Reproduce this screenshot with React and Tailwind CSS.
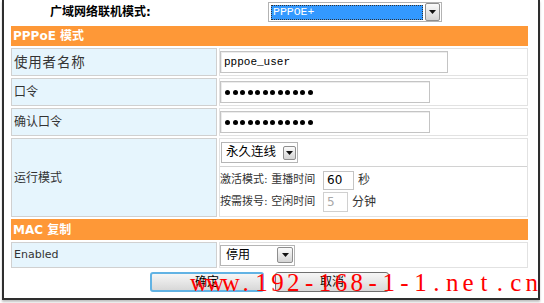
import React from "react";

function Arrow({ cls }) {
  return (
    <div
      className={
        "flex items-center justify-center rounded-[2px] border border-[#8e8e8e] bg-gradient-to-b from-[#fbfbfb] to-[#d4d4d4] " +
        cls
      }
    >
      <svg width="7" height="4" viewBox="0 0 7 4">
        <path d="M0 0h7L3.5 4z" fill="#111" />
      </svg>
    </div>
  );
}

function Dots() {
  const dots = Array.from({ length: 12 });
  return (
    <div className="flex h-[22px] w-[210px] items-center gap-[2.5px] border border-[#c4c4c4] bg-white pl-[4px] shadow-[inset_1px_1px_0_#ececec]">
      {dots.map((_, i) => (
        <span key={i} className="block h-[5px] w-[5px] rounded-full bg-black" />
      ))}
    </div>
  );
}

function Row({ label, labelCls, h, children, rightCls }) {
  return (
    <div className={"flex gap-[2px] " + h}>
      <div
        className={
          "flex w-[206px] items-center border border-[#d0d0d0] bg-[#e6f5fd] pl-[2px] text-[#333] " +
          (labelCls || "text-[12px]")
        }
      >
        {label}
      </div>
      <div className={"flex flex-1 border border-[#e2e2e2] bg-white " + (rightCls || "items-center")}>
        {children}
      </div>
    </div>
  );
}

const MARK = "www.192-168-1-1.net.cn".split("");

export default function App() {
  return (
    <div className="relative h-[303px] w-[544px] overflow-hidden bg-white font-['DejaVu_Sans','Noto_Sans_CJK_SC',sans-serif]">
      <div className="ml-[2px] h-[300px] w-[538px] border-x-2 border-b-2 border-[#2e2e2e] shadow-[0_2px_2px_rgba(0,0,0,0.25)]">
        <div className="pl-[7px]">
          {/* top row */}
          <div className="flex h-[24px] items-center">
            <div className="ml-[39px] w-[218px] text-[12px] font-bold text-black">广域网络联机模式:</div>
            <div className="flex h-[20px] w-[174px] items-center border border-[#b3b3b3] bg-white pl-[2px] pr-[1px]">
              <div className="flex h-[15px] w-[152px] items-center border border-dotted border-[#333] bg-[#3399ff] pl-[1px] font-['Liberation_Mono',monospace] text-[11.5px] text-white">
                PPPOE+
              </div>
              <Arrow cls="ml-auto h-[18px] w-[15px]" />
            </div>
          </div>

          <div className="mt-[2px] flex w-[517px] flex-col gap-[2px]">
            <div className="flex h-[20px] items-center bg-[#fe9837] pl-[2px] text-[12px] font-bold text-white">
              PPPoE 模式
            </div>

            <Row label="使用者名称" labelCls="text-[13.5px] tracking-[0.8px]" h="h-[28px]">
              <div className="flex h-[22px] w-[228px] items-center border border-[#c4c4c4] bg-white pl-[3px] font-['Liberation_Mono',monospace] text-[11px] text-black shadow-[inset_1px_1px_0_#ececec]">
                pppoe_user
              </div>
            </Row>

            <Row label="口令" h="h-[28px]">
              <Dots />
            </Row>

            <Row label="确认口令" h="h-[28px]">
              <Dots />
            </Row>

            <Row label="运行模式" h="h-[79px]" rightCls="flex-col">
              <div className="flex h-[28px] items-center border-b border-[#d2d2d2] pl-[1px]">
                <div className="flex h-[21px] w-[77px] items-center border border-[#b5b5b5] bg-white pl-[4px] pr-[1px] text-[12.5px] text-black">
                  永久连线
                  <Arrow cls="ml-auto h-[14px] w-[13px]" />
                </div>
              </div>
              <div className="flex flex-col pt-[2px] text-[11px] text-[#333]">
                <div className="flex h-[22px] items-center">
                  <span className="w-[103px] whitespace-nowrap">激活模式: 重播时间</span>
                  <div className="flex h-[19px] w-[31px] items-center border border-[#c4c4c4] bg-white pl-[3px] text-[12px] text-black">
                    60
                  </div>
                  <span className="ml-[4px] text-[12px]">秒</span>
                </div>
                <div className="flex h-[22px] items-center">
                  <span className="w-[103px] whitespace-nowrap">按需拨号: 空闲时间</span>
                  <div className="flex h-[20px] w-[25px] items-center border border-[#d0d0d0] bg-white pl-[3px] text-[12px] text-[#a8a8a8]">
                    5
                  </div>
                  <span className="ml-[4px] text-[12px]">分钟</span>
                </div>
              </div>
            </Row>

            <div className="flex h-[21px] items-center bg-[#fe9837] pl-[2px] text-[12px] font-bold text-white">
              MAC 复制
            </div>

            <Row label="Enabled" labelCls="text-[11px]" h="h-[26px]">
              <div className="flex h-[21px] w-[75px] items-center border border-[#b5b5b5] bg-white pl-[5px] pr-[1px] text-[12px] text-black">
                停用
                <Arrow cls="ml-auto h-[16px] w-[16px]" />
              </div>
            </Row>
          </div>

          {/* buttons */}
          <div className="mt-[4px] flex gap-[11px] pl-[139px]">
            <button className="flex h-[20px] w-[114px] items-start justify-center rounded-[3px] border-2 border-[#62b3e4] bg-gradient-to-b from-[#f6f6f6] to-[#d8d8d8] pt-[1px] text-[12px] leading-[14px] text-black">
              确定
            </button>
            <button className="flex h-[20px] w-[114px] items-start justify-center rounded-[3px] border border-[#707070] bg-gradient-to-b from-[#f6f6f6] to-[#d8d8d8] pt-[2px] text-[12px] leading-[14px] text-black">
              取消
            </button>
          </div>
        </div>
      </div>

      <div className="absolute left-[190px] top-[270px] flex whitespace-nowrap font-['Liberation_Serif',serif] text-[25px] leading-none text-[#ff0000]">
        {MARK.map((c, i) => (
          <span key={i} className="inline-block w-[15.9px] text-center">
            {c}
          </span>
        ))}
      </div>
    </div>
  );
}
